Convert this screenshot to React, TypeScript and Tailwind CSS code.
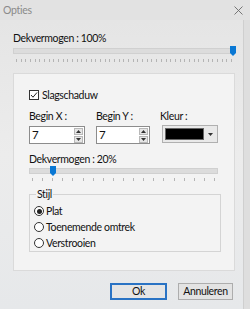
import React from "react";

const font = { fontFamily: 'Lato, "Noto Sans", sans-serif' };

function Ticks({ count }: { count: number }) {
  return (
    <div className="flex justify-between h-[3px]">
      {Array.from({ length: count }).map((_, i) => (
        <div key={i} className="w-px h-[3px] bg-[#b4b4b4]" />
      ))}
    </div>
  );
}

function Thumb() {
  return (
    <svg width="6" height="10" viewBox="0 0 6 10" className="block">
      <path d="M0 0 H6 V7 L3 10 L0 7 Z" fill="#0a78d4" />
    </svg>
  );
}

function Spin() {
  return (
    <div className="flex flex-col gap-px py-[1px] pr-[1px]">
      <div className="w-[9px] h-[7px] bg-[#e6e6e6] border border-[#b8b8b8] flex items-center justify-center">
        <svg width="5" height="3" viewBox="0 0 5 3"><path d="M0 3 L2.5 0 L5 3 Z" fill="#333" /></svg>
      </div>
      <div className="w-[9px] h-[7px] bg-[#e6e6e6] border border-[#b8b8b8] flex items-center justify-center">
        <svg width="5" height="3" viewBox="0 0 5 3"><path d="M0 0 L2.5 3 L5 0 Z" fill="#333" /></svg>
      </div>
    </div>
  );
}

function NumInput({ w }: { w: string }) {
  return (
    <div className={`${w} h-[18px] bg-white border border-[#8c8c8c] flex items-center justify-between`}>
      <span className="pl-[2px] text-[11.5px] leading-none text-[#111]">7</span>
      <Spin />
    </div>
  );
}

function Radio({ checked, label }: { checked?: boolean; label: string }) {
  return (
    <div className="flex items-center gap-[2px] h-[16px]">
      <div className="w-[10px] h-[10px] rounded-full border border-[#333] bg-white flex items-center justify-center">
        {checked && <div className="w-[5px] h-[5px] rounded-full bg-[#222]" />}
      </div>
      <span className="text-[10.5px] leading-none tracking-[-0.35px] text-[#111]">{label}</span>
    </div>
  );
}

export default function App() {
  return (
    <div
      className="w-[250px] h-[309px] overflow-hidden bg-gradient-to-b from-[#e4e4e4] via-[#ececec] to-[#e6e8ea] flex flex-col"
      style={font}
    >
      <div className="h-[20px] flex items-center justify-between pl-[3px] pr-[7px] bg-[#e2e2e2]">
        <span className="text-[10.5px] text-[#8a8a8a] leading-none tracking-[-0.3px]">Opties</span>
        <svg width="9" height="9" viewBox="0 0 9 9">
          <path d="M0.5 0.5 L8.5 8.5 M8.5 0.5 L0.5 8.5" stroke="#6a6a6a" strokeWidth="0.9" />
        </svg>
      </div>
      <div className="flex flex-1">
        <div className="w-[243px] flex flex-col px-[13px] pr-[8px]">
          <div className="mt-[12px] h-[12px] flex items-center text-[10.5px] leading-none tracking-[-0.35px] text-[#111]">
            Dekvermogen : 100%
          </div>
          <div className="mt-[2px] relative h-[10px] flex items-center">
            <div className="w-full h-[6px] bg-[#dcdcdc] border border-[#d0d0d0]" />
            <div className="absolute right-[-1px] top-0">
              <Thumb />
            </div>
          </div>
          <div className="mt-[3px] px-[3px]">
            <Ticks count={47} />
          </div>
          <div className="mt-[11px] h-[198px] bg-[#f3f3f3] border border-[#dadada] flex flex-col pl-[15px] pr-[16px]">
            <div className="mt-[15px] h-[12px] flex items-center gap-[3px]">
              <div className="w-[10px] h-[10px] border border-[#333] bg-white flex items-center justify-center">
                <svg width="8" height="8" viewBox="0 0 8 8">
                  <path d="M1 4 L3 6.2 L7 1.5" stroke="#222" strokeWidth="1" fill="none" />
                </svg>
              </div>
              <span className="text-[10.5px] leading-none tracking-[-0.35px] text-[#111]">Slagschaduw</span>
            </div>
            <div className="mt-[9px] flex">
              <div className="flex flex-col w-[67px]">
                <span className="h-[12px] text-[10.5px] leading-[12px] tracking-[-0.35px] text-[#111]">Begin X :</span>
                <div className="mt-[4px]"><NumInput w="w-[56px]" /></div>
              </div>
              <div className="flex flex-col w-[64px]">
                <span className="h-[12px] text-[10.5px] leading-[12px] tracking-[-0.35px] text-[#111]">Begin Y :</span>
                <div className="mt-[4px]"><NumInput w="w-[54px]" /></div>
              </div>
              <div className="flex flex-col">
                <span className="h-[12px] text-[10.5px] leading-[12px] tracking-[-0.35px] text-[#111]">Kleur :</span>
                <div className="mt-[3px] ml-[2px] w-[56px] h-[18px] bg-[#e9e9e9] border border-[#b0b0b0] flex items-center p-[2px] gap-[1px]">
                  <div className="flex-1 h-full bg-black border border-[#666]" />
                  <div className="w-[10px] h-full flex items-center justify-center">
                    <svg width="5" height="3" viewBox="0 0 5 3"><path d="M0 0 L2.5 3 L5 0 Z" fill="#333" /></svg>
                  </div>
                </div>
              </div>
            </div>
            <div className="mt-[9px] h-[12px] flex items-center text-[10.5px] leading-none tracking-[-0.35px] text-[#111]">
              Dekvermogen : 20%
            </div>
            <div className="mt-[1px] relative h-[10px] flex items-center">
              <div className="w-full h-[6px] bg-[#dcdcdc] border border-[#d0d0d0]" />
              <div className="absolute left-[21px] top-0">
                <Thumb />
              </div>
            </div>
            <div className="mt-[2px] px-[3px]">
              <Ticks count={19} />
            </div>
            <div className="mt-[13px] relative border border-[#d4d4d4] h-[58px] flex flex-col pl-[4px] pt-[8px] mr-[-3px]">
              <span className="absolute left-[6px] top-[-7px] px-[1px] bg-[#f3f3f3] text-[10.5px] leading-[12px] tracking-[-0.35px] text-[#111]">
                Stijl
              </span>
              <Radio checked label="Plat" />
              <Radio label="Toenemende omtrek" />
              <Radio label="Verstrooien" />
            </div>
          </div>
          <div className="mt-[12px] flex justify-end gap-[11px] pr-[2px]">
            <button className="w-[57px] h-[17px] border-2 border-[#2a73c4] bg-[#e5e5e5] text-[10.5px] leading-none tracking-[-0.35px] text-[#111]">
              Ok
            </button>
            <button className="w-[55px] h-[17px] border border-[#adadad] bg-[#e3e3e3] text-[10.5px] leading-none tracking-[-0.35px] text-[#111]">
              Annuleren
            </button>
          </div>
        </div>
        <div className="w-[7px] border-l border-[#cfcfcf] bg-[#dedede]" />
      </div>
    </div>
  );
}
